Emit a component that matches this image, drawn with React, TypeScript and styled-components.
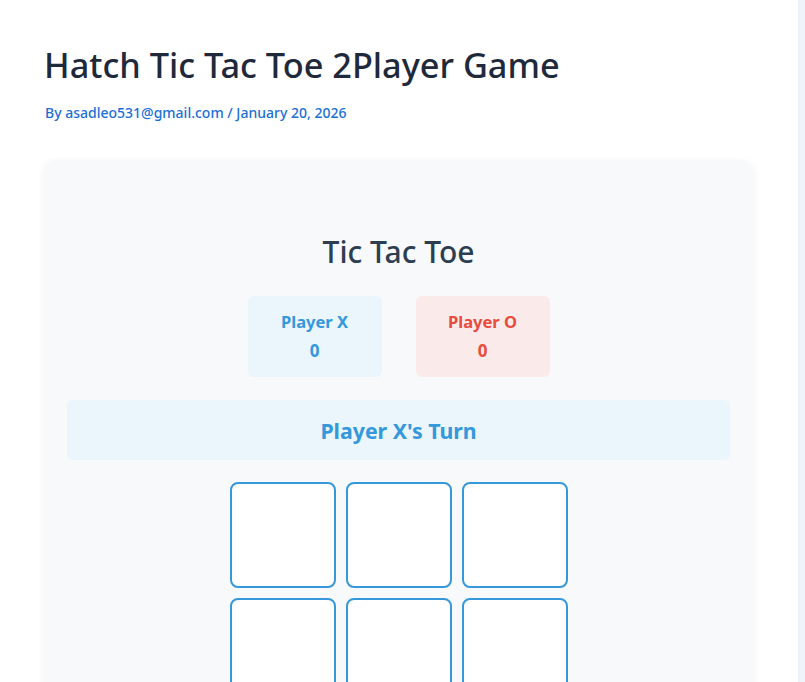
import styled, { createGlobalStyle } from "styled-components";

const GlobalStyle = createGlobalStyle`
  html, body {
    margin: 0;
    padding: 0;
    background: #eef4fa;
    font-family: "Noto Sans", "Open Sans", Arial, sans-serif;
  }
`;

const Page = styled.div`
  width: 798px;
  min-height: 682px;
  background: #ffffff;
  padding: 43px 45px 0 44px;
  box-sizing: border-box;
`;

const Title = styled.h1`
  margin: 0;
  color: #1e293b;
  font-size: 34.3px;
  font-weight: 500;
  line-height: 44px;
`;

const Meta = styled.p`
  margin: 16px 0 0 1px;
  color: #1a6fd4;
  font-size: 14px;
  font-weight: 500;
  line-height: 19px;
`;

const Card = styled.section`
  margin-top: 38px;
  width: 709px;
  background: #f8f9fa;
  border-radius: 12px;
  box-shadow: 0 2px 10px rgba(0, 0, 0, 0.06);
  padding: 70px 23px 40px;
  box-sizing: border-box;
  display: flex;
  flex-direction: column;
  align-items: center;
`;

const GameTitle = styled.h2`
  margin: 0;
  color: #2c3e50;
  font-size: 30px;
  font-weight: 500;
  line-height: 44px;
`;

const Scores = styled.div`
  margin-top: 22px;
  display: flex;
  gap: 34px;
`;

const ScoreBox = styled.div<{ $o?: boolean }>`
  width: 134px;
  height: 81px;
  border-radius: 6px;
  background: ${(p) => (p.$o ? "#fbeaea" : "#ebf5fc")};
  color: ${(p) => (p.$o ? "#e74c3c" : "#3498db")};
  display: flex;
  flex-direction: column;
  align-items: center;
  justify-content: center;
  gap: 5px;
  font-weight: 700;
`;

const ScoreLabel = styled.div`
  font-size: 16.5px;
  line-height: 24px;
`;

const ScoreValue = styled.div`
  font-size: 17px;
  line-height: 24px;
`;

const Turn = styled.div`
  margin-top: 23px;
  align-self: stretch;
  height: 60px;
  border-radius: 6px;
  background: #ebf5fc;
  color: #3498db;
  font-size: 21.3px;
  font-weight: 700;
  display: flex;
  align-items: center;
  justify-content: center;
`;

const Board = styled.div`
  margin-top: 22px;
  display: grid;
  grid-template-columns: repeat(3, 106px);
  grid-auto-rows: 106px;
  gap: 10px;
`;

const Cell = styled.button`
  background: #ffffff;
  border: 2px solid #3498db;
  border-radius: 8px;
  padding: 0;
  cursor: pointer;
`;

export default function App() {
  const cells = Array.from({ length: 9 });
  return (
    <>
      <GlobalStyle />
      <Page>
        <Title>Hatch Tic Tac Toe 2Player Game</Title>
        <Meta>By asadleo531@gmail.com / January 20, 2026</Meta>
        <Card>
          <GameTitle>Tic Tac Toe</GameTitle>
          <Scores>
            <ScoreBox>
              <ScoreLabel>Player X</ScoreLabel>
              <ScoreValue>0</ScoreValue>
            </ScoreBox>
            <ScoreBox $o>
              <ScoreLabel>Player O</ScoreLabel>
              <ScoreValue>0</ScoreValue>
            </ScoreBox>
          </Scores>
          <Turn>Player X's Turn</Turn>
          <Board>
            {cells.map((_, i) => (
              <Cell key={i} aria-label={`cell ${i + 1}`} />
            ))}
          </Board>
        </Card>
      </Page>
    </>
  );
}
